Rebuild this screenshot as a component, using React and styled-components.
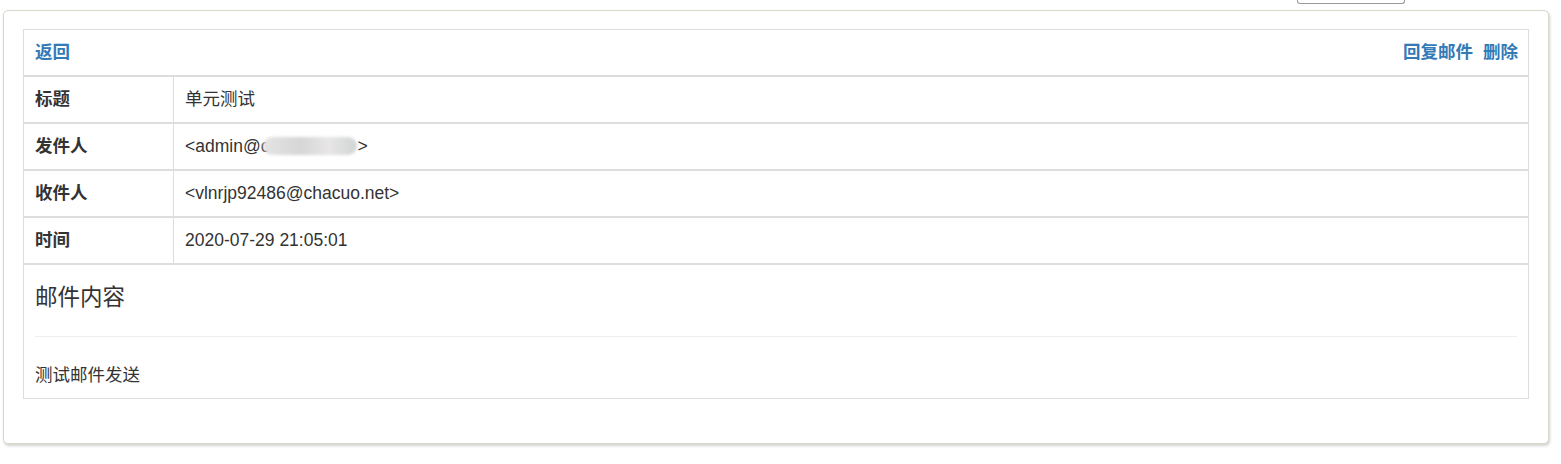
import React from "react";
import styled, { createGlobalStyle } from "styled-components";

const GlobalStyle = createGlobalStyle`
  body {
    margin: 0;
    background: #fff;
    font-family: "Liberation Sans", "Noto Sans CJK SC", Arial, sans-serif;
    color: #333;
  }
`;

const Page = styled.div`
  width: 1561px;
  height: 464px;
  overflow: hidden;
`;

// the bit of the toolbar that is still on screen above the panel
const Toolbar = styled.div`
  height: 10px;
  display: flex;
  justify-content: flex-end;
  align-items: flex-start;
  padding-right: 156px;
  overflow: hidden;
`;

const ToolButton = styled.div`
  width: 106px;
  height: 3px;
  border: 1px solid #999;
  border-top: none;
  border-radius: 0 0 3px 3px;
  background: #fff;
`;

const Panel = styled.div`
  margin: 0 13px 0 3px;
  box-sizing: border-box;
  width: 1546px;
  height: 434px;
  border: 1px solid #d3dcc6;
  border-radius: 5px;
  box-shadow: 1px 2px 3px rgba(0, 0, 0, 0.18);
  padding: 18px 19px 0 19px;
  background: #fff;
`;

const Table = styled.div`
  border: 1px solid #ddd;
  font-size: 17.5px;
  line-height: 25px;
`;

const HeadRow = styled.div`
  display: flex;
  justify-content: space-between;
  padding: 10px 10px 10px 11px;
  border-bottom: 2px solid #ddd;
`;

const Links = styled.div`
  display: flex;
  gap: 10px;
`;

const Link = styled.a`
  color: #337ab7;
  font-weight: bold;
  text-decoration: none;
  cursor: pointer;
`;

const Row = styled.div`
  display: grid;
  grid-template-columns: 150px 1fr;
  border-bottom: 2px solid #ddd;
`;

const Label = styled.div`
  padding: 10px 11px;
  font-weight: bold;
  border-right: 1px solid #ddd;
`;

const Value = styled.div`
  padding: 10px 11px;
  white-space: nowrap;
`;

const Blur = styled.span`
  display: inline-block;
  width: 94px;
  height: 18px;
  margin-left: -6px;
  vertical-align: -3px;
  border-radius: 9px;
  background: linear-gradient(90deg, #e4e4e4, #d6d6d6 40%, #e8e6e6 70%, #d0d4d4);
  filter: blur(1.5px);
`;

const Body = styled.div`
  padding: 10px 11px;
`;

const Heading = styled.h4`
  margin: 10px 0 26px;
  font-size: 22.5px;
  line-height: 25px;
  font-weight: 400;
`;

const Rule = styled.hr`
  margin: 0 0 26px;
  border: none;
  border-top: 1px solid #eee;
`;

const Text = styled.div`
  height: 25px;
`;

const fields = [
  ["标题", "单元测试"],
  ["发件人", null],
  ["收件人", "<vlnrjp92486@chacuo.net>"],
  ["时间", "2020-07-29 21:05:01"],
];

export default function App() {
  return (
    <Page>
      <GlobalStyle />
      <Toolbar>
        <ToolButton />
      </Toolbar>
      <Panel>
        <Table>
          <HeadRow>
            <Link>返回</Link>
            <Links>
              <Link>回复邮件</Link>
              <Link>删除</Link>
            </Links>
          </HeadRow>
          {fields.map(([label, value]) => (
            <Row key={label}>
              <Label>{label}</Label>
              <Value>
                {value === null ? (
                  <>
                    {"<admin@c"}
                    <Blur />
                    {">"}
                  </>
                ) : (
                  value
                )}
              </Value>
            </Row>
          ))}
          <Body>
            <Heading>邮件内容</Heading>
            <Rule />
            <Text>测试邮件发送</Text>
          </Body>
        </Table>
      </Panel>
    </Page>
  );
}
